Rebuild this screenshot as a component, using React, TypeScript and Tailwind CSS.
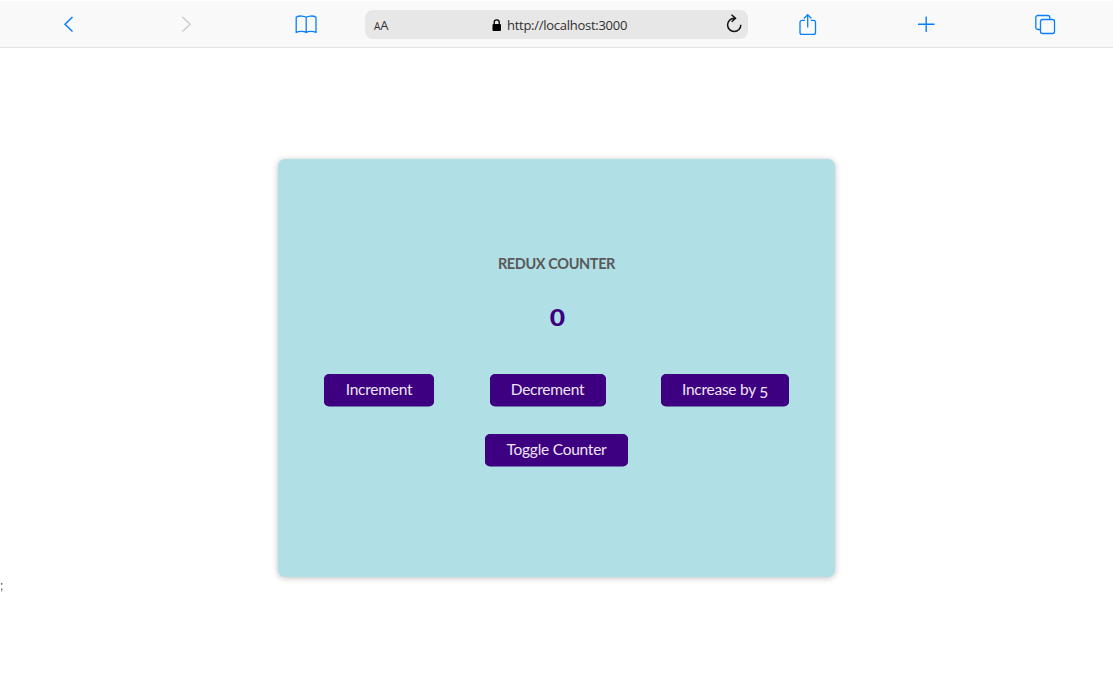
import React, { useState } from 'react';

const button =
  "flex h-8 items-center justify-center whitespace-nowrap rounded-[5px] bg-[#3d0080] font-['Lato',sans-serif] text-[15.5px] leading-none tracking-[-0.25px] text-[#eee6f5] shadow-[0_0.5px_0_#3d0080]";

function Toolbar() {
  return (
    <header className="flex h-12 w-full shrink-0 items-center border-b border-t border-b-[#e3e3e3] border-t-white bg-[#f9f9f9] text-[#087fff]">
      <button aria-label="Back" className="ml-[62px] shrink-0">
        <svg width="14" height="18" viewBox="0 0 14 18" fill="none" stroke="currentColor" strokeWidth="1.5"><path d="M10.500 2 3 9.300l7.500 7.200" /></svg>
      </button>
      <button aria-label="Forward" className="ml-[104px] shrink-0 text-[#cbcbcb]">
        <svg width="14" height="18" viewBox="0 0 14 18" fill="none" stroke="currentColor" strokeWidth="1.4"><path d="m2.500 2 7.700 7.300-7.700 7.200" /></svg>
      </button>
      <button aria-label="Bookmarks" className="ml-[100px] shrink-0">
        <svg width="24" height="20" viewBox="0 0 24 20" fill="none" stroke="currentColor" strokeWidth="1.3" strokeLinejoin="round"><path d="M12.200 3.300C10.500 1.700 4.500 1.500 2.200 3.300v15.200c2.300-1.500 8-1.600 10 0 2-1.600 7.500-1.500 9.800 0V3.300C19.700 1.500 13.900 1.700 12.200 3.300Zm0 0v15.200" /></svg>
      </button>
      <div className="ml-[47px] flex h-[29px] w-[383px] shrink-0 items-center rounded-[8px] bg-[#e7e7e7] font-['Open_Sans',sans-serif] text-[#303030]">
        <span className="ml-[9px] flex w-[118px] items-baseline pt-[3px] leading-none">
          <span className="text-[10px]">A</span><span className="text-[13px]">A</span>
        </span>
        <svg width="10" height="12" viewBox="0 0 10 12" className="relative top-[0.5px] shrink-0 text-black"><rect x="0.500" y="5" width="8.500" height="7" rx="1" fill="currentColor" /><path d="M2.200 6V3.300a2.500 2.500 0 0 1 5 0V6" fill="none" stroke="currentColor" strokeWidth="1.3" /></svg>
        <span className="ml-[5px] w-[121px] whitespace-nowrap pt-[2px] text-[13px] leading-none tracking-[-0.27px]">http://localhost:3000</span>
        <svg width="18" height="20" viewBox="0 0 18 20" fill="none" stroke="#111" strokeWidth="1.5" className="ml-[97px] shrink-0"><path d="M10.500 4.300H9.200a6.600 6.600 0 1 0 6.600 6.500M6.500 0.800l4 3.500-3.900 3.500" /></svg>
      </div>
      <button aria-label="Share" className="ml-[50px] shrink-0">
        <svg width="20" height="24" viewBox="0 0 20 24" fill="none" stroke="currentColor" strokeWidth="1.3"><path d="M6.800 8.400H4a2 2 0 0 0-2 2v10a2 2 0 0 0 2 2h11.500a2 2 0 0 0 2-2v-10a2 2 0 0 0-2-2h-2.800M9.700 15.500V2.800M6 6.500l3.700-3.900 3.700 3.900" /></svg>
      </button>
      <button aria-label="New tab" className="ml-[100px] shrink-0">
        <svg width="18" height="18" viewBox="0 0 18 18" fill="none" stroke="currentColor" strokeWidth="1.4"><path d="M0 9.200h16.500M8.200 1.500V17" /></svg>
      </button>
      <button aria-label="Tabs" className="ml-[98px] shrink-0">
        <svg width="22" height="22" viewBox="0 0 22 22" fill="none" stroke="currentColor" strokeWidth="1.3"><rect x="6.500" y="6.500" width="14" height="14" rx="2" /><path d="M6.500 16.500H3.800a2 2 0 0 1-2-2v-10a2 2 0 0 1 2-2h10a2 2 0 0 1 2 2v2" /></svg>
      </button>
    </header>
  );
}

export default function App() {
  const [count, setCount] = useState(0);
  const [visible, setVisible] = useState(true);

  return (
    <div className="flex h-[696px] w-full flex-col overflow-hidden bg-white">
      <Toolbar />
      <main className="mx-auto mt-[111px] flex h-[418px] w-[557px] shrink-0 flex-col items-center rounded-[7px] bg-[#b0e0e6] shadow-[0_1px_6px_rgba(0,0,0,0.26)]">
        <h1 className="mt-[96px] whitespace-nowrap font-['Lato',sans-serif] text-[14.5px] font-bold leading-[18px] tracking-[-0.38px] text-[#595959]">REDUX COUNTER</h1>
        <div className="mt-[27px] flex h-[36px] items-center justify-center pl-px">
          {visible && (
            <span className="inline-block scale-x-[1.2] font-['Lato',sans-serif] text-[22px] font-black leading-[30px] text-[#3d0080]">{count}</span>
          )}
        </div>
        <div className="mt-[38px] flex w-[465px] justify-between">
          <button onClick={() => setCount(count + 1)} className={`${button} w-[110px]`}>Increment</button>
          <button onClick={() => setCount(count - 1)} className={`${button} w-[116px]`}>Decrement</button>
          <button onClick={() => setCount(count + 5)} className={`${button} w-[128px]`}><span>Increase by <span className="relative top-[3px]">5</span></span></button>
        </div>
        <button onClick={() => setVisible(!visible)} className={`${button} mt-7 w-[143px]`}>Toggle Counter</button>
      </main>
      <span className="-ml-[0.5px] h-4 w-3 font-['Lato',sans-serif] text-[13px] leading-[16px] text-[#595959] opacity-95 will-change-transform">;</span>
    </div>
  );
}
